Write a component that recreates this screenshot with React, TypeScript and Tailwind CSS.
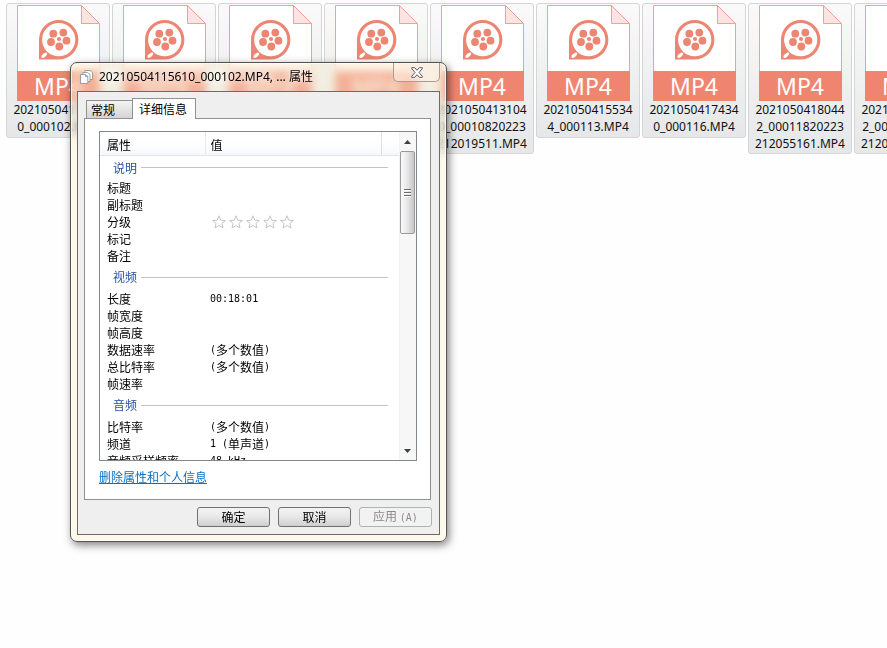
import type { ReactNode } from "react";

type FileEntry = { lines: string[] };

const files: FileEntry[] = [
  { lines: ["2021050411561", "0_000102.MP4"] },
  { lines: [] },
  { lines: [] },
  { lines: [] },
  { lines: ["2021050413104", "0_00010820223", "212019511.MP4"] },
  { lines: ["2021050415534", "4_000113.MP4"] },
  { lines: ["2021050417434", "0_000116.MP4"] },
  { lines: ["2021050418044", "2_00011820223", "212055161.MP4"] },
  { lines: ["2021050418044", "2_00011820223", "212055161.MP4"] },
];

function FileTile({ lines }: FileEntry) {
  return (
    <li className="flex min-h-[135px] w-[104px] shrink-0 flex-col items-center rounded-[3px] border border-[#d3d5d7] bg-linear-to-b from-[#fafafa] to-[#e6e7e8] p-px">
      <div className="flex w-[83px] flex-col">
        <svg viewBox="0 0 83 66" className="block h-[66px] w-[83px]" aria-hidden="true">
          <path d="M.5 66V.5H64.500L82.500 18.500V66" fill="#fff" stroke="#f0a094" />
          <path d="M64.500 .5V18.500H82.500Z" fill="#fde3e1" stroke="#f0a094" />
          <path d="M22 34.700A19.700 19.700 0 1 1 41.700 54.400H22Z" fill="#ec8672" />
          <circle cx="41.700" cy="34.700" r="16.600" fill="#fff" />
          <ellipse cx="27.300" cy="50.200" rx="3.500" ry="1.700" transform="rotate(-42 27.300 50.200)" fill="#fff" />
          <g fill="#ec8672">
            <circle cx="42" cy="34" r="2.100" />
            <circle cx="36.300" cy="28.700" r="3.900" />
            <circle cx="46.300" cy="27.600" r="3.900" />
            <circle cx="49.500" cy="35.700" r="3.900" />
            <circle cx="42.300" cy="41.500" r="3.900" />
            <circle cx="34" cy="37" r="3.900" />
          </g>
        </svg>
        <span className="h-[30px] bg-[#ef8570] text-center text-[23px] leading-[30px] text-white">MP4</span>
      </div>
      <p className="text-center text-[12px] leading-[17px] whitespace-nowrap text-[#111]">
        {lines.map((line) => (
          <span key={line} className="block">
            {line}
          </span>
        ))}
      </p>
    </li>
  );
}

function Stars() {
  return (
    <span className="flex gap-[3px] pl-[2px]" role="img" aria-label="0 / 5">
      {[0, 1, 2, 3, 4].map((n) => (
        <svg key={n} viewBox="0 0 14 14" className="h-[14px] w-[14px]">
          <path
            d="M7 .8L8.800 5.200L13.400 5.500L9.900 8.400L11 13L7 10.500L3 13L4.100 8.400L.6 5.500L5.200 5.200Z"
            fill="#fff"
            stroke="#c2c5c8"
            strokeLinejoin="round"
          />
        </svg>
      ))}
    </span>
  );
}

type Section = { title: string; first?: boolean; rows: [string, ReactNode?][] };

const many = <Paren>多个数值</Paren>;

function Mono({ children }: { children: ReactNode }) {
  return <span className="font-['DejaVu_Sans_Mono','Noto_Sans_CJK_SC',monospace] text-[10px]">{children}</span>;
}

function Paren({ children }: { children: ReactNode }) {
  return (
    <>
      <Mono>(</Mono>
      {children}
      <Mono>)</Mono>
    </>
  );
}

const sections: Section[] = [
  {
    title: "说明",
    first: true,
    rows: [["标题"], ["副标题"], ["分级", <Stars />], ["标记"], ["备注"]],
  },
  {
    title: "视频",
    rows: [
      ["长度", <Mono>00:18:01</Mono>],
      ["帧宽度"],
      ["帧高度"],
      ["数据速率", many],
      ["总比特率", many],
      ["帧速率"],
    ],
  },
  {
    title: "音频",
    rows: [
      ["比特率", many],
      ["频道", <><Mono>1 </Mono><Paren>单声道</Paren></>],
      ["音频采样频率", <Mono>48 kHz</Mono>],
    ],
  },
];

function PropertyTable() {
  return (
    <table className="w-full table-fixed border-collapse text-left">
      <colgroup>
        <col className="w-[105px]" />
        <col className="w-[176px]" />
        <col />
      </colgroup>
      <thead>
        <tr className="h-[24px] bg-linear-to-b from-white from-40% to-[#f5f7f9] shadow-[inset_0_-1px_0_#e2e4e8]">
          <th className="border-r border-[#e6e8eb] p-0 pl-[7px] font-normal leading-[23px]">属性</th>
          <th className="border-r border-[#dcdfe3] p-0 pl-[5px] font-normal leading-[23px]">值</th>
          <td className="p-0" />
        </tr>
      </thead>
      {sections.map((section) => (
        <tbody key={section.title}>
          <tr>
            <th colSpan={3} className="p-0 font-normal">
              <div
                className={`flex items-center gap-1 pr-[11px] pl-[13px] text-[#2450a4] ${section.first ? "h-[23px]" : "h-[26px]"}`}
              >
                {section.title}
                <span className="h-px flex-1 bg-[#bcc5d8]" />
              </div>
            </th>
          </tr>
          {section.rows.map(([name, value]) => (
            <tr key={name}>
              <th className="p-0 pl-[7px] font-normal">
                <div className="h-[17px] leading-[17px] whitespace-nowrap">{name}</div>
              </th>
              <td colSpan={2} className="p-0 pl-[5px]">
                <div className="flex h-[17px] items-center leading-[17px] whitespace-pre">{value}</div>
              </td>
            </tr>
          ))}
        </tbody>
      ))}
    </table>
  );
}

function ScrollBar() {
  return (
    <div className="flex w-[17px] shrink-0 flex-col border-l border-[#f2f2f2] bg-[#f7f7f7] pr-px">
      <button type="button" aria-label="向上滚动" className="flex h-[19px] items-center justify-center">
        <svg viewBox="0 0 7 4" className="h-[4px] w-[7px]">
          <path d="M3.500 0L7 4H0Z" fill="#404040" />
        </svg>
      </button>
      <div className="flex h-[83px] flex-col items-center justify-center gap-px rounded-[2px] border border-[#9a9a9a] bg-linear-to-r from-[#fafafa] via-[#e6e6e7] to-[#c6c7c9]">
        <span className="h-[2px] w-[7px] border-b border-white bg-[#6c6c6c]" />
        <span className="h-[2px] w-[7px] border-b border-white bg-[#6c6c6c]" />
        <span className="h-[2px] w-[7px] border-b border-white bg-[#6c6c6c]" />
      </div>
      <button type="button" aria-label="向下滚动" className="mt-auto flex h-[19px] items-center justify-center">
        <svg viewBox="0 0 7 4" className="h-[4px] w-[7px]">
          <path d="M0 0H7L3.500 4Z" fill="#404040" />
        </svg>
      </button>
    </div>
  );
}

const pushButton = "h-[20px] w-[73px] rounded-[3px] border leading-[16px] text-center";

function PropertiesDialog() {
  return (
    <section
      role="dialog"
      aria-label="属性"
      className="absolute top-[62px] left-[70px] w-[377px] rounded-[7px] border border-[#55524f] bg-[#fbf1d0]/40 px-[6px] pb-[6px] font-['Noto_Sans_CJK_SC',sans-serif] text-[12px] text-black shadow-[2px_3px_8px_rgba(0,0,0,0.5),inset_0_0_0_1px_rgba(255,255,255,0.7)] backdrop-blur-[4px]"
    >
      <header className="flex h-[28px] items-start">
        <svg viewBox="0 0 13 14" className="mt-[7px] ml-[3px] h-[14px] w-[13px]" aria-hidden="true">
          <g fill="#fff" stroke="#858b90" strokeWidth=".8">
            <path d="M5 .5H10L12.500 2.500V9.500H5Z" />
            <path d="M2.800 2.500H7.500L10 4.500V11.500H2.800Z" />
            <path d="M.5 4.500H5.500L7.800 6.500V13.500H.5Z" />
            <path d="M5.500 4.500V6.500H7.800" fill="none" />
          </g>
        </svg>
        <h1 className="ml-[6px] flex-1 font-['Noto_Sans','Noto_Sans_CJK_SC',sans-serif] text-[12px] leading-[28px] whitespace-nowrap [text-shadow:0_0_6px_#fff,0_0_10px_#fff]">
          20210504115610_000102.MP4, ... 属性
        </h1>
        <button
          type="button"
          aria-label="关闭"
          className="flex h-[19px] w-[47px] items-center justify-center rounded-b-[5px] border border-t-0 border-[#a99c92] bg-[#fdf0e2]/60"
        >
          <svg viewBox="0 0 12 11" className="h-[11px] w-[12px]">
            <path
              d="M.7 .7H3.700L6 3.300L8.300 .7H11.300V1.700L8 5.500L11.300 9.300V10.300H8.300L6 7.700L3.700 10.300H.7V9.300L4 5.500L.7 1.700Z"
              fill="#fff"
              stroke="#555b68"
            />
          </svg>
        </button>
      </header>

      <div className="border border-[#6d6a68] bg-[#efefef] pt-[6px] pr-[8px] pb-[7px] pl-[6px]">
        <div role="tablist" className="flex h-[20px] items-end pl-[2px]">
          <button
            type="button"
            role="tab"
            aria-selected="false"
            className="h-[18px] w-[46px] border border-r-0 border-b-0 border-[#8f9193] bg-linear-to-b from-[#f4f4f4] to-[#d4d4d4] pl-[4px] text-left leading-[17px]"
          >
            常规
          </button>
          <button
            type="button"
            role="tab"
            aria-selected="true"
            className="relative -mb-px h-[21px] w-[64px] border border-b-0 border-[#8f9193] bg-white pl-[6px] text-left leading-[17px] whitespace-nowrap"
          >
            <span className="block h-[19px]">详细信息</span>
          </button>
        </div>
        <div role="tabpanel" className="flex flex-col items-stretch border border-[#8f9193] bg-white pt-[12px] pr-[13px] pb-[13px] pl-[14px]">
          <div className="flex h-[330px] overflow-hidden border border-[#828790]">
            <div className="min-w-0 flex-1 overflow-hidden">
              <PropertyTable />
            </div>
            <ScrollBar />
          </div>
          <a href="#remove" className="mt-[6px] self-start leading-[19px] text-[#0b70c0] underline">
            删除属性和个人信息
          </a>
        </div>
        <footer className="-mr-px flex justify-end gap-[8px] pt-[7px]">
          <button type="button" className={`${pushButton} border-[#707070] bg-linear-to-b from-[#f3f3f3] via-[#e8e8e8] to-[#cfcfcf]`}>
            确定
          </button>
          <button type="button" className={`${pushButton} border-[#707070] bg-linear-to-b from-[#f3f3f3] via-[#e8e8e8] to-[#cfcfcf]`}>
            取消
          </button>
          <button type="button" disabled className={`${pushButton} border-[#adb2b5] bg-[#f2f2f2] text-[#8a8a8a]`}>
            应用 <Mono>(A)</Mono>
          </button>
        </footer>
      </div>
    </section>
  );
}

export default function App() {
  return (
    <main className="relative min-h-screen overflow-hidden bg-[#fefefe] font-['Noto_Sans','Noto_Sans_CJK_SC',sans-serif]">
      <ul className="flex items-start gap-[2px] pt-[3px] pl-[6px]">
        {files.map((file, index) => (
          <FileTile key={index} lines={file.lines} />
        ))}
      </ul>
      <PropertiesDialog />
    </main>
  );
}
